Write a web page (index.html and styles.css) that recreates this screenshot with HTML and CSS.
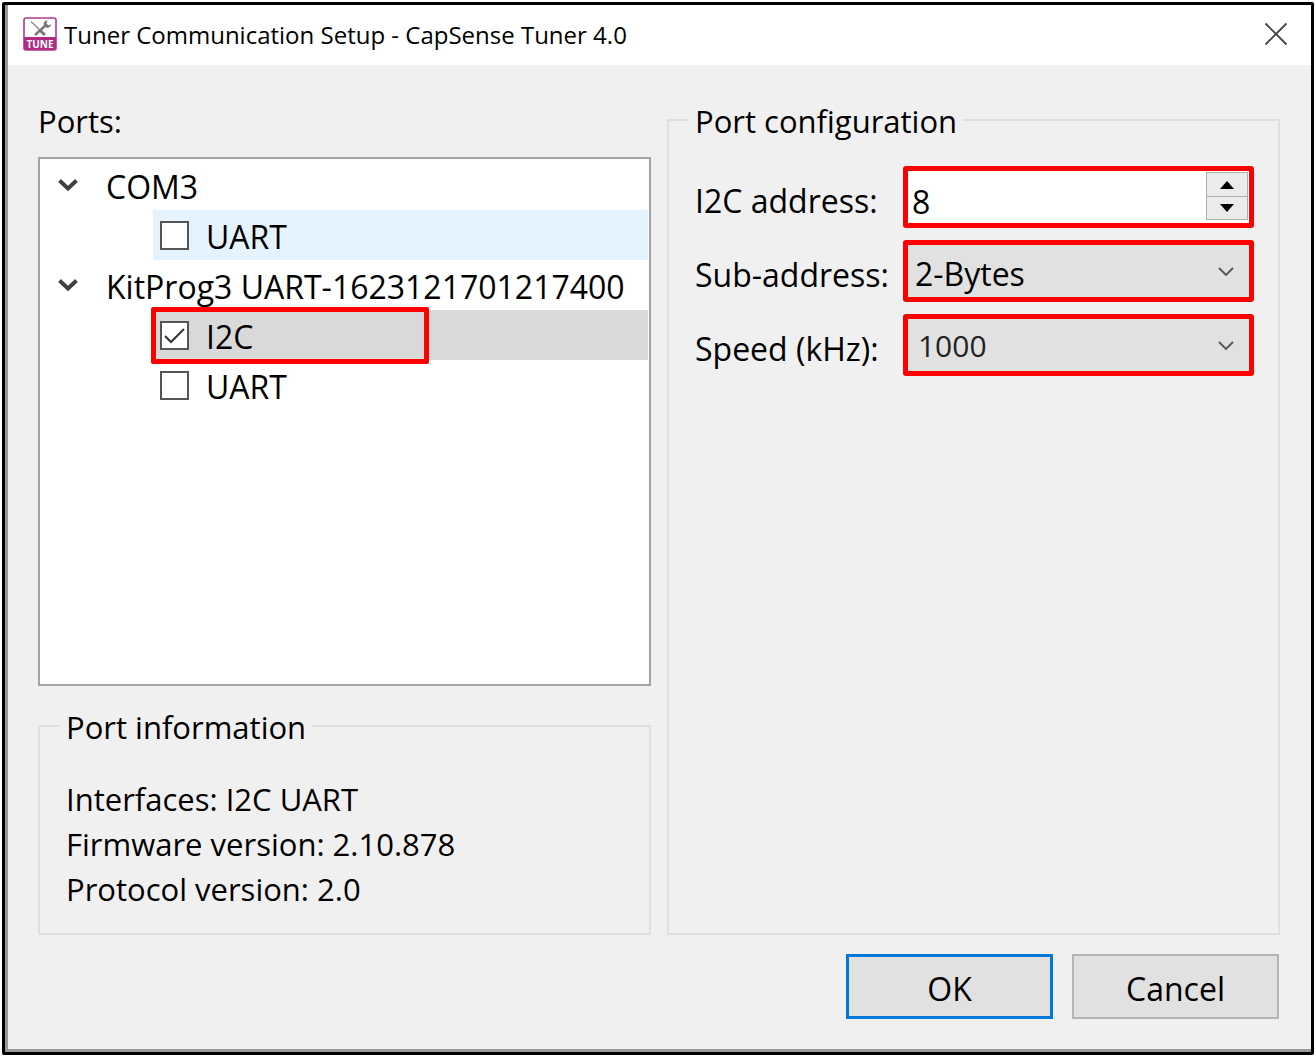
FILE: index.html
```html
<!DOCTYPE html>
<html lang="en">
<head>
<meta charset="utf-8">
<title>Tuner Communication Setup - CapSense Tuner 4.0</title>
<link rel="stylesheet" href="styles.css">
</head>
<body>
<form class="dialog">
  <header class="titlebar">
    <svg class="app-icon" viewBox="0 0 34 34" aria-hidden="true">
      <rect x="1" y="1" width="32" height="32" rx="2" fill="#fff" stroke="#b5388a" stroke-width="1.6"/>
      <path d="M1 20h32v11a2 2 0 0 1-2 2H3a2 2 0 0 1-2-2z" fill="#b02a80"/>
      <path d="M8 4.500L18 14" stroke="#8a8084" stroke-width="1.200"/>
      <path d="M17 13.500l5 4.500" stroke="#7d7377" stroke-width="3"/>
      <path d="M12 18L23 8" stroke="#7d7377" stroke-width="2.400"/>
      <path d="M24.500 3.500c-3 0-4.500 2.500-3.500 5l2 2c2.500 1 5-.5 5-3.500l-2.500 1.500-2-2z" fill="#7d7377"/>
      <text x="17" y="31" text-anchor="middle" class="icon-text">TUNE</text>
    </svg>
    <h1 class="title">Tuner Communication Setup - CapSense Tuner 4.0</h1>
    <button type="button" class="close" aria-label="Close">
      <svg width="24" height="24" viewBox="0 0 24 24"><path d="M1.500 1.500l21 21M22.500 1.500l-21 21" stroke="#444" stroke-width="1.800"/></svg>
    </button>
  </header>
  <main class="content">
    <section class="column">
      <h2 class="heading" id="ports">Ports:</h2>
      <ul class="tree" aria-labelledby="ports">
        <li>
          <div class="node">
            <button type="button" class="toggle" aria-label="Collapse COM3"><svg width="20" height="14" viewBox="0 0 20 14"><path d="M1.500 2.500L10 10.500l8.500-8" fill="none" stroke="#404040" stroke-width="4"/></svg></button>
            <span class="name">COM3</span>
          </div>
          <ul class="branch">
            <li class="leaf hovered"><label class="choice"><input type="checkbox" class="check"><span class="name">UART</span></label></li>
          </ul>
        </li>
        <li>
          <div class="node">
            <button type="button" class="toggle" aria-label="Collapse KitProg3"><svg width="20" height="14" viewBox="0 0 20 14"><path d="M1.500 2.500L10 10.500l8.500-8" fill="none" stroke="#404040" stroke-width="4"/></svg></button>
            <span class="name">KitProg3 UART-1623121701217400</span>
          </div>
          <ul class="branch">
            <li class="leaf selected"><label class="choice"><input type="checkbox" class="check" checked><span class="name">I2C</span></label></li>
            <li class="leaf"><label class="choice"><input type="checkbox" class="check"><span class="name">UART</span></label></li>
          </ul>
        </li>
      </ul>
      <fieldset class="group">
        <legend class="legend">Port information</legend>
        <div class="info">
          <p>Interfaces: I2C UART</p>
          <p>Firmware version: 2.10.878</p>
          <p>Protocol version: 2.0</p>
        </div>
      </fieldset>
    </section>
    <fieldset class="group">
      <legend class="legend">Port configuration</legend>
      <div class="fields">
        <label class="label" for="address">I2C address:</label>
        <div class="control spin">
          <input type="number" id="address" class="value" value="8">
          <div class="steps">
            <button type="button" class="step" aria-label="Increase"><svg width="14" height="8" viewBox="0 0 14 8"><path d="M7 0l7 8H0z"/></svg></button>
            <button type="button" class="step" aria-label="Decrease"><svg width="14" height="8" viewBox="0 0 14 8"><path d="M0 0h14L7 8z"/></svg></button>
          </div>
        </div>
        <label class="label" for="sub">Sub-address:</label>
        <div class="control combo">
          <select id="sub" class="value"><option>2-Bytes</option></select>
          <svg class="arrow" width="16" height="10" viewBox="0 0 16 10"><path d="M1 1l7 7 7-7" fill="none" stroke="#555" stroke-width="1.800"/></svg>
        </div>
        <label class="label" for="speed">Speed (kHz):</label>
        <div class="control combo speed">
          <select id="speed" class="value"><option>1000</option></select>
          <svg class="arrow" width="16" height="10" viewBox="0 0 16 10"><path d="M1 1l7 7 7-7" fill="none" stroke="#555" stroke-width="1.800"/></svg>
        </div>
      </div>
    </fieldset>
  </main>
  <footer class="actions">
    <button type="submit" class="button primary">OK</button>
    <button type="button" class="button">Cancel</button>
  </footer>
</form>
</body>
</html>
```
FILE: styles.css
```css
*, *::after { box-sizing: border-box; }

body {
  margin: 0;
  padding: 2px;
  background: #fff;
  color: #000;
  font: 32px/44px "Open Sans", "Noto Sans", sans-serif;
}

h1, h2, p, ul { margin: 0; padding: 0; font: inherit; list-style: none; }
button, input, select { font: inherit; color: inherit; margin: 0; }
svg { display: block; }

.dialog {
  display: flex;
  flex-direction: column;
  min-height: calc(100vh - 4px);
  border: 3px solid #000;
  border-radius: 2px;
  background: #f0f0f0;
  box-shadow: inset 3px -3px #999;
}

.titlebar {
  display: flex;
  align-items: center;
  height: 60px;
  margin-left: 3px;
  padding: 0 23px 2px 15px;
  background: #fff;
}
.app-icon { width: 34px; height: 34px; }
.icon-text { fill: #fff; font: bold 10px "Open Sans", sans-serif; }
.title { flex: 1; padding: 2px 0 0 7px; font-size: 24px; }
.close { padding: 0; border: 0; background: none; }

.content {
  flex: 1;
  display: grid;
  grid-template-columns: 1fr 1fr;
  gap: 16px;
  padding: 31px 31px 19px 33px;
}
.column { display: flex; flex-direction: column; min-width: 0; }
.heading { font-size: 31px; line-height: 50px; }

.tree {
  flex: 1;
  margin: 11px 0 16px;
  padding: 1px;
  border: 2px solid #a0a3a8;
  background: #fff;
}
.node { display: flex; align-items: center; height: 50px; padding-left: 17px; gap: 28px; white-space: nowrap; }
.toggle { padding: 0; border: 0; background: none; }
.name { padding-top: 4px; }
.branch { padding-left: 112px; }
.leaf { position: relative; height: 50px; }
.hovered { background: #e5f3ff; }
.selected { background: #d9d9d9; }
.selected::after {
  content: "";
  position: absolute;
  inset: -3px auto -4px -2px;
  width: 278px;
  border: 5px solid #f00;
  border-radius: 2px;
  pointer-events: none;
}
.choice { display: flex; align-items: center; height: 50px; padding-left: 7px; gap: 17px; }
.check {
  appearance: none;
  width: 29px;
  height: 29px;
  border: 2px solid #555;
  background: #fff;
}
.check:checked {
  background: #fff url("data:image/svg+xml,%3Csvg xmlns='http://www.w3.org/2000/svg' viewBox='0 0 25 25'%3E%3Cpath d='M3 13l6 6L22 6' fill='none' stroke='%23333' stroke-width='2'/%3E%3C/svg%3E");
}

.group { min-width: 0; margin: 0; padding: 0 24px 21px 20px; border: 2px solid #dfdfdf; }
.legend { padding: 3px 6px 0; font-size: 31px; }
.info { padding: 28px 6px 0; font-size: 31px; line-height: 45px; }

.fields {
  display: grid;
  grid-template-columns: auto 1fr;
  gap: 12px 14px;
  align-items: center;
  padding: 23px 0 0 6px;
  white-space: nowrap;
}
.label { padding-top: 8px; }
.control { display: grid; height: 62px; border: 5px solid #f00; border-radius: 3px; min-width: 0; }
.value {
  width: 100%;
  height: 52px;
  min-width: 0;
  padding: 6px 0 0 7px;
  border: 0;
  border-radius: 0;
  background: none;
  appearance: none;
  outline: 0;
}
.spin { grid-template-columns: 1fr 42px; padding: 1px 1px 0 0; background: #fff; }
.spin .value { padding-left: 4px; appearance: textfield; }
.value::-webkit-inner-spin-button { appearance: none; }
.steps { display: grid; grid-template-rows: 1fr 1fr; height: 48px; border: 1px solid #adadad; }
.step { display: grid; place-items: center; padding: 0; border: 0; background: #ebebeb; }
.step + .step { border-top: 1px solid #adadad; }
.combo { background: #e1e1e1; }
.combo > * { grid-area: 1 / 1; }
.arrow { place-self: center end; margin: 2px 15px 0 0; pointer-events: none; }
.speed .value { padding: 2px 0 0 10px; color: #222; font-size: 30px; }

.actions { display: flex; justify-content: flex-end; gap: 19px; padding: 0 32px 33px; }
.button { width: 207px; height: 65px; padding: 4px 0 0; border: 2px solid #b4b4b4; background: #e1e1e1; }
.primary { border: 3px solid #0078d7; }
```
